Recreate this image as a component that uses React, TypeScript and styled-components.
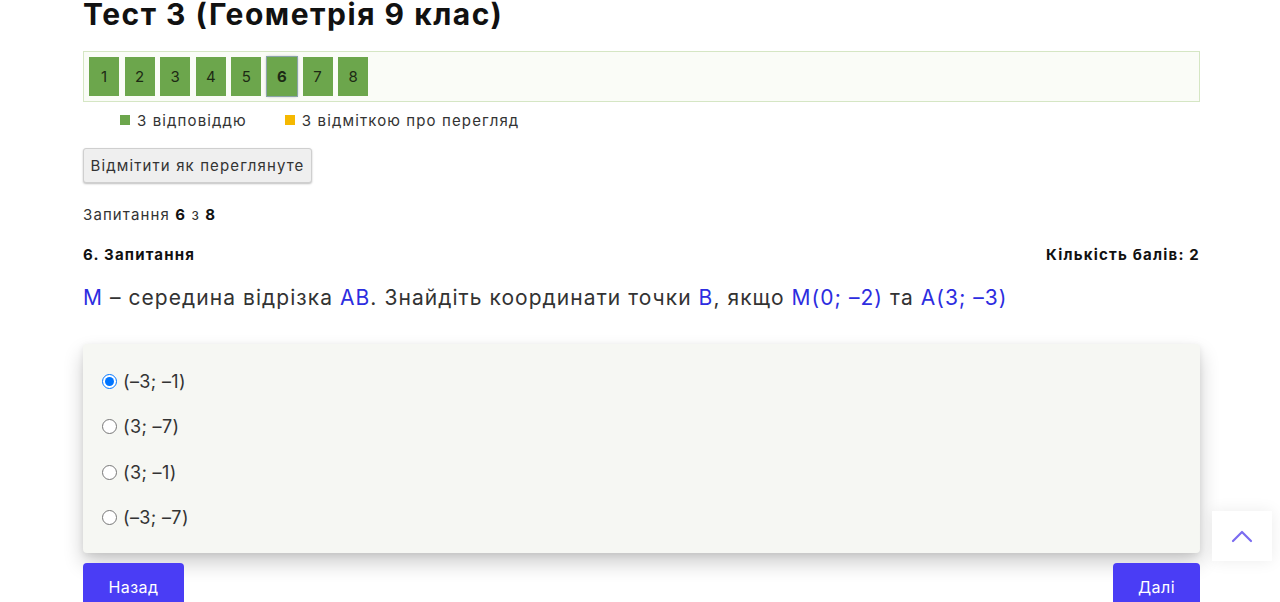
import React from "react";
import styled, { createGlobalStyle } from "styled-components";

const Global = createGlobalStyle`
  html, body { margin: 0; padding: 0; background: #ffffff; overflow: hidden; }
  body { font-family: "Inter", "Open Sans", sans-serif; color: #222; letter-spacing: 0.07em; }
  * { box-sizing: border-box; }
`;

const Page = styled.div`
  width: 1117px;
  margin-left: 83px;
  display: flex;
  flex-direction: column;
`;

const Title = styled.h1`
  margin: 0;
  font-size: 30px;
  line-height: 28px;
  font-weight: 700;
  color: #111;
  letter-spacing: 0.05em;
`;

const NavBox = styled.div`
  margin-top: 23px;
  height: 51px;
  border: 1px solid #d5e6c4;
  background: #fafcf7;
  display: flex;
  align-items: center;
  gap: 5.6px;
  padding: 0 5px;
`;

const NavBtn = styled.div<{ $active?: boolean }>`
  width: 30px;
  height: 39px;
  background: #6ca64c;
  display: flex;
  align-items: center;
  justify-content: center;
  font-size: 15px;
  letter-spacing: 0;
  color: #1d2a14;
  font-weight: ${(p) => (p.$active ? 700 : 400)};
  box-shadow: ${(p) => (p.$active ? "0 0 0 1px #8aa4a8, 0 0 3px rgba(0,0,0,0.4)" : "none")};
`;

const Legend = styled.div`
  display: flex;
  gap: 38px;
  padding-left: 37px;
  margin-top: 9px;
  height: 18px;
  align-items: center;
`;

const LegendItem = styled.div`
  display: flex;
  align-items: center;
  gap: 7px;
  font-size: 15px;
  color: #333;
`;

const Swatch = styled.span<{ $color: string }>`
  width: 10px;
  height: 10px;
  background: ${(p) => p.$color};
  display: inline-block;
`;

const MarkBtn = styled.button`
  align-self: flex-start;
  margin-top: 19px;
  height: 35px;
  width: 229px;
  font-family: inherit;
  letter-spacing: inherit;
  font-size: 15px;
  color: #333;
  background: #efefef;
  border: 1px solid #cfcfcf;
  border-radius: 3px;
  box-shadow: 0 1px 2px rgba(0,0,0,0.25);
  padding: 0 5px;
  white-space: nowrap;
`;

const Counter = styled.div`
  margin-top: 22px;
  font-size: 15px;
  color: #333;
  b { color: #111; }
`;

const QHead = styled.div`
  display: flex;
  justify-content: space-between;
  margin-top: 21px;
  font-size: 15px;
  font-weight: 700;
  letter-spacing: 0.08em;
  color: #111;
`;

const QText = styled.p`
  margin: 20px 0 0 0;
  font-size: 21px;
  line-height: 28px;
  letter-spacing: 0.05em;
  color: #333;
`;

const Var = styled.span`
  color: #2d2de0;
`;

const Card = styled.div`
  margin-top: 32px;
  height: 209px;
  background: #f6f7f3;
  border-radius: 4px;
  box-shadow: 0 10px 20px rgba(0,0,0,0.2), 0 2px 6px rgba(0,0,0,0.08);
  padding: 26px 0 0 19px;
  display: flex;
  flex-direction: column;
  gap: 23.5px;
`;

const Option = styled.label`
  display: flex;
  align-items: center;
  gap: 6px;
  height: 22px;
  font-size: 18px;
  letter-spacing: 0.02em;
  color: #333;
  input { margin: 0; width: 15px; height: 15px; }
`;

const Footer = styled.div`
  display: flex;
  justify-content: space-between;
  margin-top: 10px;
`;

const NavButton = styled.button<{ $w: number }>`
  width: ${(p) => p.$w}px;
  height: 48px;
  background: #4a3df5;
  color: #fff;
  border: none;
  border-radius: 4px;
  font-family: inherit;
  letter-spacing: 0.03em;
  font-size: 16px;
  padding: 0;
`;

const ToTop = styled.div`
  position: fixed;
  right: 8px;
  bottom: 41px;
  width: 60px;
  height: 50px;
  background: #fff;
  box-shadow: 0 0 16px rgba(0,0,0,0.08);
  display: flex;
  align-items: center;
  justify-content: center;
`;

export default function App() {
  const nums = [1, 2, 3, 4, 5, 6, 7, 8];
  const opts = ["(–3; –1)", "(3; –7)", "(3; –1)", "(–3; –7)"];
  return (
    <>
      <Global />
      <Page>
        <Title>Тест 3 (Геометрія 9 клас)</Title>
        <NavBox>
          {nums.map((n) => (
            <NavBtn key={n} $active={n === 6}>{n}</NavBtn>
          ))}
        </NavBox>
        <Legend>
          <LegendItem><Swatch $color="#6ca64c" />З відповіддю</LegendItem>
          <LegendItem><Swatch $color="#f5b800" />З відміткою про перегляд</LegendItem>
        </Legend>
        <MarkBtn>Відмітити як переглянуте</MarkBtn>
        <Counter>Запитання <b>6</b> з <b>8</b></Counter>
        <QHead>
          <span>6. Запитання</span>
          <span>Кількість балів: 2</span>
        </QHead>
        <QText>
          <Var>М</Var> – середина відрізка <Var>АВ</Var>. Знайдіть координати точки <Var>В</Var>, якщо <Var>М(0; –2)</Var> та <Var>А(3; –3)</Var>
        </QText>
        <Card>
          {opts.map((o, i) => (
            <Option key={o}>
              <input type="radio" name="a" defaultChecked={i === 0} />
              {o}
            </Option>
          ))}
        </Card>
        <Footer>
          <NavButton $w={101}>Назад</NavButton>
          <NavButton $w={87}>Далі</NavButton>
        </Footer>
      </Page>
      <ToTop>
        <svg width="22" height="14" viewBox="0 0 22 14" fill="none">
          <path d="M2 12 L11 3 L20 12" stroke="#7b6cf0" strokeWidth="2.2" strokeLinecap="round" strokeLinejoin="round" />
        </svg>
      </ToTop>
    </>
  );
}
